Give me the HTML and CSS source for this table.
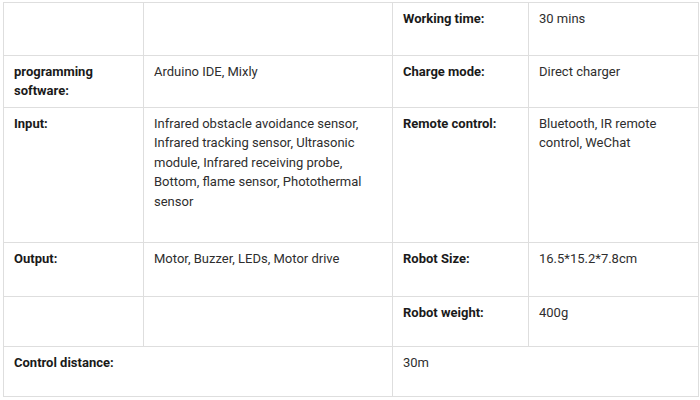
FILE: index.html
```html
<!DOCTYPE html>
<html>
<head>
<meta charset="utf-8">
<link rel="stylesheet" href="styles.css">
</head>
<body>
<div class="wrap">
<table class="spec">
  <colgroup>
    <col class="c1"><col class="c2"><col class="c3"><col class="c4">
  </colgroup>
  <tr class="r1">
    <td></td>
    <td></td>
    <td class="label">Working time:</td>
    <td>30 mins</td>
  </tr>
  <tr class="r2">
    <td class="label">programming software:</td>
    <td>Arduino IDE, Mixly</td>
    <td class="label">Charge mode:</td>
    <td>Direct charger</td>
  </tr>
  <tr class="r3">
    <td class="label">Input:</td>
    <td>Infrared obstacle avoidance sensor, Infrared tracking sensor, Ultrasonic module, Infrared receiving probe, Bottom, flame sensor, Photothermal sensor</td>
    <td class="label">Remote control:</td>
    <td>Bluetooth, IR remote control, WeChat</td>
  </tr>
  <tr class="r4">
    <td class="label">Output:</td>
    <td>Motor, Buzzer, LEDs, Motor drive</td>
    <td class="label">Robot Size:</td>
    <td>16.5*15.2*7.8cm</td>
  </tr>
  <tr class="r5">
    <td></td>
    <td></td>
    <td class="label">Robot weight:</td>
    <td>400g</td>
  </tr>
  <tr class="r6">
    <td class="label" colspan="2">Control distance:</td>
    <td colspan="2">30m</td>
  </tr>
</table>
</div>
</body>
</html>
```

FILE: styles.css
```css
html, body {
  margin: 0;
  padding: 0;
  background: #ffffff;
}

.wrap {
  padding: 2px 0 0 3px;
}

.spec {
  border-collapse: collapse;
  table-layout: fixed;
  width: 695px;
  font-family: Roboto, "Liberation Sans", sans-serif;
  font-size: 13px;
  line-height: 19.4px;
  color: #2e2e2e;
}

.c1 { width: 140px; }
.c2 { width: 249px; }
.c3 { width: 136px; }
.c4 { width: 170px; }

.spec td {
  border: 1px solid #dedede;
  padding: 6px 10px;
  vertical-align: top;
  text-align: left;
}

.spec td.label {
  font-weight: bold;
  color: #1a1a1a;
}

.r1 { height: 53px; }
.r2 { height: 52px; }
.r3 { height: 135px; }
.r4 { height: 54px; }
.r5 { height: 50px; }
.r6 { height: 50px; }
```
